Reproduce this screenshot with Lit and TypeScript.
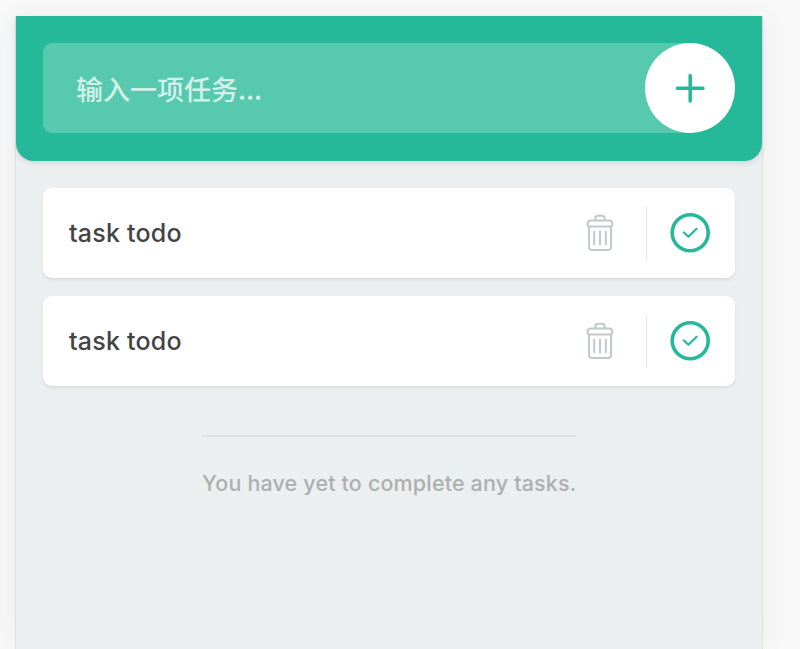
import { LitElement, html, css } from "lit";
import { customElement, property, state } from "lit/decorators.js";

@customElement("task-row")
class TaskRow extends LitElement {
  @property() label = "";

  static styles = css`
    :host {
      display: flex;
      align-items: center;
      height: 90px;
      box-sizing: border-box;
      padding: 0 25px 0 26px;
      background: #fff;
      border-radius: 9px;
      box-shadow: 0 2px 3px rgba(44, 62, 80, 0.1);
    }
    .label {
      flex: 1;
      color: #444;
      font-size: 25px;
      font-weight: 550;
      line-height: 36px;
      letter-spacing: 0.22px;
    }
    button {
      display: block;
      border: 0;
      padding: 0;
      background: none;
    }
    svg {
      display: block;
      fill: none;
      stroke-linecap: round;
      stroke-linejoin: round;
    }
    .remove {
      stroke: #c0cac8;
      stroke-width: 2;
    }
    .divider {
      width: 1px;
      height: 54px;
      margin: 0 23px 0 31px;
      background: #e6e9ea;
    }
    .complete {
      stroke: #25b99a;
    }
  `;

  render() {
    return html`
      <span class="label">${this.label}</span>
      <button aria-label="Remove">
        <svg class="remove" width="29" height="38" viewBox="0 0 29 38">
          <path d="M9.4 6.200V4.500Q9.400 1.800 12 1.800h4Q18.600 1.800 18.600 4.500V6.200" />
          <path d="M5 6.400h18Q26.300 6.400 26.300 9.700v1.300Q26.300 12.400 24.900 12.400H3Q1.600 12.400 1.600 11V9.700Q1.600 6.400 5 6.400Z" />
          <path d="M3.100 12.400V33.200Q3.100 36 5.900 36h16.300Q25 36 25 33.200V12.400" />
          <path d="M8.200 17.500v13M14 17.500v13M19.800 17.500v13" />
        </svg>
      </button>
      <span class="divider"></span>
      <button aria-label="Complete">
        <svg class="complete" width="40" height="40" viewBox="0 0 40 40">
          <circle cx="20.200" cy="19.800" r="18" stroke-width="3.600" />
          <path d="M13.900 19.500l4.500 4.300 8.200-8" stroke-width="2.200" />
        </svg>
      </button>
    `;
  }
}

@customElement("app-root")
class AppRoot extends LitElement {
  @state() private tasks = ["task todo", "task todo"];

  static styles = css`
    :host {
      display: block;
      height: 649px;
      box-sizing: border-box;
      padding: 16px 37px 0 15px;
      overflow: hidden;
      background: #f8f8f8;
      font-family: Inter, "Noto Sans CJK SC", sans-serif;
    }
    .panel {
      height: 633px;
      box-sizing: border-box;
      border: solid #dce1e2;
      border-width: 0 1px;
      background: #ebeff0;
      box-shadow: 0 0 28px rgba(0, 0, 0, 0.05);
    }
    header {
      height: 144.5px;
      box-sizing: border-box;
      padding: 27.400px 27px 27px;
      border-radius: 0 0 18px 18px;
      background: #25b99a;
      box-shadow: 0 2px 5px rgba(44, 62, 80, 0.14);
    }
    .entry {
      display: flex;
      height: 90px;
      border-radius: 9px 45px 45px 9px;
      background: #56c9af;
    }
    input {
      flex: 1;
      min-width: 0;
      box-sizing: border-box;
      padding: 0 33px;
      border: 0;
      outline: 0;
      background: none;
      font: 500 27px "Noto Sans CJK SC", sans-serif;
    }
    input::placeholder {
      color: #d3f1e9;
      opacity: 1;
    }
    .add {
      width: 90px;
      height: 90px;
      display: grid;
      place-items: center;
      padding: 0;
      border: 0;
      border-radius: 50%;
      background: #fff;
    }
    .add svg {
      display: block;
      fill: none;
      stroke: #25b99a;
      stroke-width: 3.5;
      stroke-linecap: round;
    }
    .list {
      display: grid;
      gap: 18px;
      padding: 27.5px 27px 0;
    }
    .done {
      width: 374px;
      box-sizing: border-box;
      margin: 49px auto 0;
      padding-top: 32px;
      border-top: 2px solid #dfe3e1;
      color: #adafaf;
      font-size: 21.5px;
      font-weight: 550;
      line-height: 28px;
      letter-spacing: 0.16px;
      white-space: nowrap;
    }
  `;

  render() {
    return html`
      <div class="panel">
        <header>
          <div class="entry">
            <input placeholder="输入一项任务..." />
            <button class="add" aria-label="Add">
              <svg width="30" height="30" viewBox="0 0 30 30">
                <path d="M15.200 2.500v25.600M2.400 15.300h25.600" />
              </svg>
            </button>
          </div>
        </header>
        <div class="list">
          ${this.tasks.map((task) => html`<task-row .label=${task}></task-row>`)}
        </div>
        <div class="done">You have yet to complete any tasks.</div>
      </div>
    `;
  }
}
